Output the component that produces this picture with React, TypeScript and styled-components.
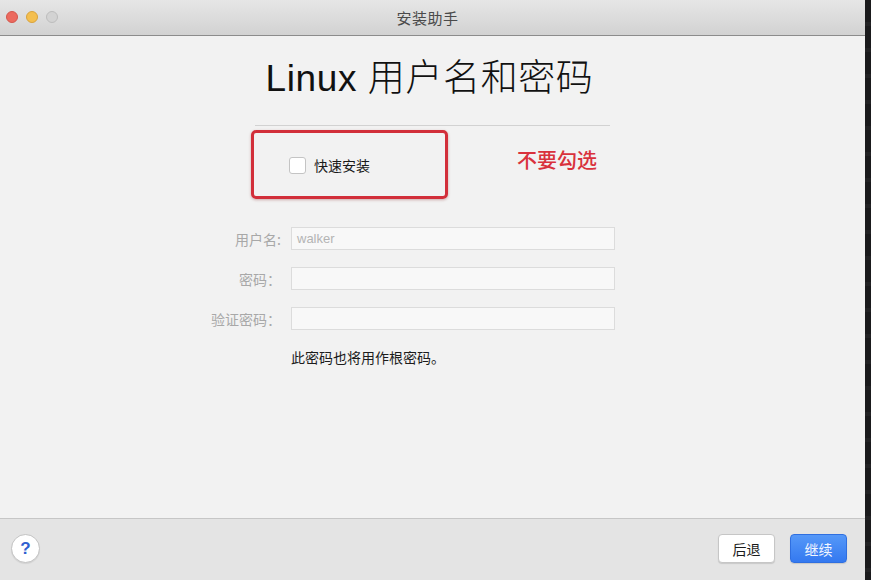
import React from "react";
import styled, { createGlobalStyle } from "styled-components";

const Global = createGlobalStyle`
  html, body { margin: 0; padding: 0; background: #1c1c1e; }
  body { font-family: "Liberation Sans", "Noto Sans CJK SC", sans-serif; }
  * { box-sizing: border-box; }
`;

const Screen = styled.div`
  display: flex;
  width: 871px;
  height: 580px;
  overflow: hidden;
`;

const Window = styled.div`
  width: 865px;
  height: 580px;
  display: flex;
  flex-direction: column;
  background: #f2f2f2;
`;

const Edge = styled.div`
  flex: 1;
  background: repeating-linear-gradient(
    to bottom,
    #1a1a1c 0px,
    #1a1a1c 22px,
    #222224 22px,
    #222224 26px
  );
`;

const TitleBar = styled.div`
  height: 36px;
  flex: none;
  display: grid;
  grid-template-columns: 1fr auto 1fr;
  align-items: center;
  background: linear-gradient(to bottom, #e6e6e6, #d2d2d2);
  border-bottom: 1px solid #8c8c8c;
  padding: 0 0 1px 6px;
`;

const Lights = styled.div`
  display: flex;
  gap: 8px;
`;

const Light = styled.span<{ $bg: string; $bd: string }>`
  width: 12px;
  height: 12px;
  border-radius: 50%;
  background: ${(p) => p.$bg};
  border: 1px solid ${(p) => p.$bd};
`;

const WinTitle = styled.div`
  font-family: "Noto Sans CJK SC", sans-serif;
  font-size: 15px;
  letter-spacing: 0.5px;
  color: #4a4a4a;
  margin-right: 16px;
`;

const Content = styled.div`
  flex: 1;
  display: flex;
  flex-direction: column;
  align-items: stretch;
`;

const Heading = styled.h1`
  margin: 19px 0 0 -6px;
  text-align: center;
  font-family: "Liberation Sans", "Noto Sans CJK SC", sans-serif;
  font-weight: 300;
  font-size: 37px;
  line-height: 48px;
  color: #111;
  letter-spacing: 0.6px;
`;

const Separator = styled.div`
  width: 355px;
  height: 1px;
  margin: 22px 0 0 255px;
  background: #d2d2d2;
`;

const QuickRow = styled.div`
  display: flex;
  align-items: center;
  margin: 4px 0 0 251px;
`;

const RedBox = styled.div`
  width: 197px;
  height: 69px;
  border: 3px solid #d22f3a;
  border-radius: 5px;
  box-shadow: 0 1px 3px rgba(120, 0, 0, 0.3);
  display: flex;
  align-items: center;
  padding: 1px 0 0 35px;
  gap: 8px;
`;

const CheckBox = styled.span`
  width: 17px;
  height: 17px;
  border: 1px solid #c4c4c4;
  border-radius: 3px;
  background: #fff;
`;

const CheckLabel = styled.span`
  font-family: "Noto Sans CJK SC", sans-serif;
  font-size: 14px;
  color: #1a1a1a;
`;

const Annotation = styled.span`
  margin: 0 0 10px 69px;
  font-family: "Noto Sans CJK SC", sans-serif;
  font-size: 20px;
  font-weight: 500;
  color: #d9323c;
`;

const Form = styled.div`
  display: grid;
  grid-template-columns: 100px 324px;
  column-gap: 10px;
  row-gap: 17px;
  margin: 28px 0 0 181px;
  align-items: center;
`;

const Label = styled.label`
  text-align: right;
  font-family: "Noto Sans CJK SC", sans-serif;
  font-size: 14px;
  color: #a8a8a8;
`;

const Field = styled.div`
  height: 23px;
  border: 1px solid #dcdcdc;
  background: #f8f8f8;
  padding-left: 5px;
  display: flex;
  align-items: center;
  font-family: "Liberation Sans", sans-serif;
  font-size: 13px;
  color: #b4b4b4;
`;

const Note = styled.div`
  grid-column: 2;
  margin-top: 0px;
  font-family: "Noto Sans CJK SC", sans-serif;
  font-size: 14px;
  color: #1c1c1c;
`;

const Footer = styled.div`
  height: 62px;
  flex: none;
  border-top: 1px solid #c6c6c6;
  background: #e4e4e4;
  display: flex;
  align-items: center;
  padding: 0 18px 2px 11px;
`;

const Help = styled.div`
  width: 29px;
  height: 29px;
  border-radius: 50%;
  background: #fff;
  border: 1px solid #c2c2c2;
  box-shadow: 0 1px 1px rgba(0, 0, 0, 0.08);
  display: flex;
  align-items: center;
  justify-content: center;
  font-family: "Liberation Sans", sans-serif;
  font-weight: 700;
  font-size: 17px;
  color: #2f5fd0;
`;

const Spacer = styled.div`
  flex: 1;
`;

const Buttons = styled.div`
  display: flex;
  gap: 15px;
`;

const Button = styled.button<{ $primary?: boolean }>`
  width: 57px;
  height: 29px;
  border-radius: 4px;
  font-family: "Noto Sans CJK SC", sans-serif;
  font-size: 14px;
  padding: 0;
  border: 1px solid ${(p) => (p.$primary ? "#2f6fe0" : "#c6c6c6")};
  background: ${(p) =>
    p.$primary ? "linear-gradient(to bottom, #5598f8, #3479f0)" : "#ffffff"};
  color: ${(p) => (p.$primary ? "#f2f6ff" : "#1a1a1a")};
  box-shadow: 0 1px 1px rgba(0, 0, 0, 0.12);
`;

export default function App() {
  return (
    <>
      <Global />
      <Screen>
        <Window>
          <TitleBar>
            <Lights>
              <Light $bg="#ec6a5f" $bd="#d4564c" />
              <Light $bg="#f4bf4f" $bd="#d9a33c" />
              <Light $bg="#d3d3d3" $bd="#bdbdbd" />
            </Lights>
            <WinTitle>安装助手</WinTitle>
            <div />
          </TitleBar>
          <Content>
            <Heading>Linux 用户名和密码</Heading>
            <Separator />
            <QuickRow>
              <RedBox>
                <CheckBox />
                <CheckLabel>快速安装</CheckLabel>
              </RedBox>
              <Annotation>不要勾选</Annotation>
            </QuickRow>
            <Form>
              <Label>用户名:</Label>
              <Field>walker</Field>
              <Label>密码：</Label>
              <Field />
              <Label>验证密码：</Label>
              <Field />
              <Note>此密码也将用作根密码。</Note>
            </Form>
          </Content>
          <Footer>
            <Help>?</Help>
            <Spacer />
            <Buttons>
              <Button>后退</Button>
              <Button $primary>继续</Button>
            </Buttons>
          </Footer>
        </Window>
        <Edge />
      </Screen>
    </>
  );
}
